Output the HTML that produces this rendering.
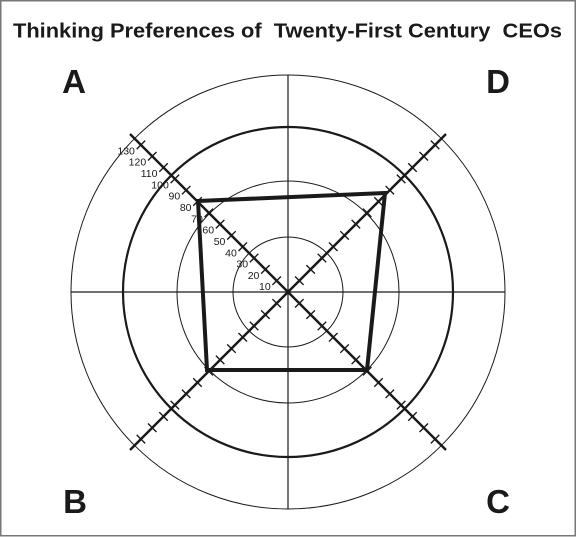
<!DOCTYPE html>
<html><head><meta charset="utf-8"><style>
html,body{margin:0;padding:0;background:#fff;}
svg{display:block;}
</style></head><body>
<svg width="576" height="537" viewBox="0 0 576 537" xmlns="http://www.w3.org/2000/svg">
<rect x="0.75" y="0.75" width="574.5" height="535" fill="#fff" stroke="#777" stroke-width="1.5"/>
<text x="13" y="37.5" textLength="549" lengthAdjust="spacingAndGlyphs" font-family="Liberation Sans, sans-serif" font-weight="bold" font-size="20.5" fill="#1a1a1a" xml:space="preserve">Thinking Preferences of  Twenty-First Century  CEOs</text>
<g font-family="Liberation Sans, sans-serif" font-weight="bold" font-size="33" fill="#1a1a1a" text-anchor="middle">
<text x="74" y="93">A</text>
<text x="498" y="93">D</text>
<text x="75" y="513">B</text>
<text x="498" y="513">C</text>
</g>
<g fill="none" stroke="#1a1a1a">
<circle cx="288" cy="292" r="217" stroke-width="1"/>
<circle cx="288" cy="292" r="165" stroke-width="2.2"/>
<circle cx="288" cy="292" r="111" stroke-width="1"/>
<circle cx="288" cy="292" r="55" stroke-width="1"/>
<line x1="71" y1="292" x2="505" y2="292" stroke-width="1.2"/>
<line x1="288" y1="75" x2="288" y2="509" stroke-width="1.2"/>
<line x1="130" y1="134" x2="446" y2="450" stroke-width="2.5"/>
<line x1="446" y1="134" x2="130" y2="450" stroke-width="2.5"/>
<g stroke-width="12" stroke-dasharray="1.4 14.6" stroke-dashoffset="0.7">
<line x1="288" y1="292" x2="140.2" y2="144.2"/>
<line x1="288" y1="292" x2="435.8" y2="144.2"/>
<line x1="288" y1="292" x2="140.2" y2="439.8"/>
<line x1="288" y1="292" x2="435.8" y2="439.8"/>
</g>
<polygon points="198,201 385,193 367,370 207,370" stroke-width="4" stroke-linejoin="miter"/>
</g>
<g font-family="Liberation Sans, sans-serif" font-size="10.5" fill="#1a1a1a" text-anchor="end">
<text x="270.7" y="290.2">10</text>
<text x="259.4" y="278.9">20</text>
<text x="248.1" y="267.6">30</text>
<text x="236.8" y="256.3">40</text>
<text x="225.4" y="244.9">50</text>
<text x="214.1" y="233.6">60</text>
<text x="202.8" y="222.3">70</text>
<text x="191.5" y="211">80</text>
<text x="180.2" y="199.7">90</text>
<text x="168.8" y="188.3">100</text>
<text x="157.5" y="177">110</text>
<text x="146.2" y="165.7">120</text>
<text x="134.9" y="154.4">130</text>
</g>
</svg>
</body></html>
